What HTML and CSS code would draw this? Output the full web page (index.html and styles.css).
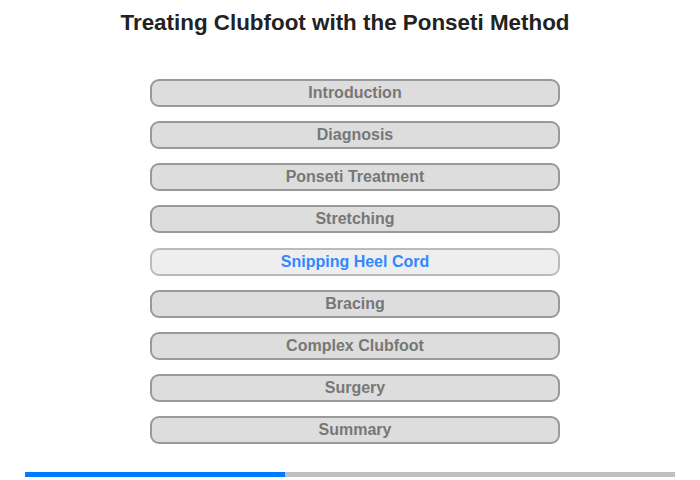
FILE: index.html
```html
<!DOCTYPE html>
<html>
<head>
<meta charset="utf-8">
<link rel="stylesheet" href="styles.css">
</head>
<body>
<div class="page">
  <h1 class="title">Treating Clubfoot with the Ponseti Method</h1>
  <nav class="menu">
    <div class="item">Introduction</div>
    <div class="item">Diagnosis</div>
    <div class="item">Ponseti Treatment</div>
    <div class="item">Stretching</div>
    <div class="item active">Snipping Heel Cord</div>
    <div class="item">Bracing</div>
    <div class="item">Complex Clubfoot</div>
    <div class="item">Surgery</div>
    <div class="item">Summary</div>
  </nav>
  <div class="progress"><div class="progress-fill" style="width:40%"></div></div>
</div>
</body>
</html>
```
FILE: styles.css
```css
html, body {
  margin: 0;
  padding: 0;
  background: #fff;
  font-family: "Liberation Sans", Arial, sans-serif;
}
.page {
  width: 700px;
  height: 480px;
  display: flex;
  flex-direction: column;
  align-items: center;
}
.title {
  margin: 10px 0 0 -10px;
  font-size: 22.4px;
  line-height: 26px;
  font-weight: bold;
  color: #222;
}
.menu {
  margin: 43px 0 0 10px;
  width: 410px;
  display: flex;
  flex-direction: column;
  gap: 14.125px;
}
.item {
  box-sizing: border-box;
  height: 28px;
  border: 2px solid #999;
  border-radius: 9px;
  background: #ddd;
  color: #777;
  font-size: 16px;
  font-weight: bold;
  line-height: 24px;
  text-align: center;
}
.item.active {
  background: #eee;
  border-color: #bbb;
  color: #3388ff;
}
.progress {
  margin-top: 28px;
  width: 650px;
  height: 5px;
  background: #c0c0c0;
}
.progress-fill {
  height: 100%;
  background: #007bff;
}
```
